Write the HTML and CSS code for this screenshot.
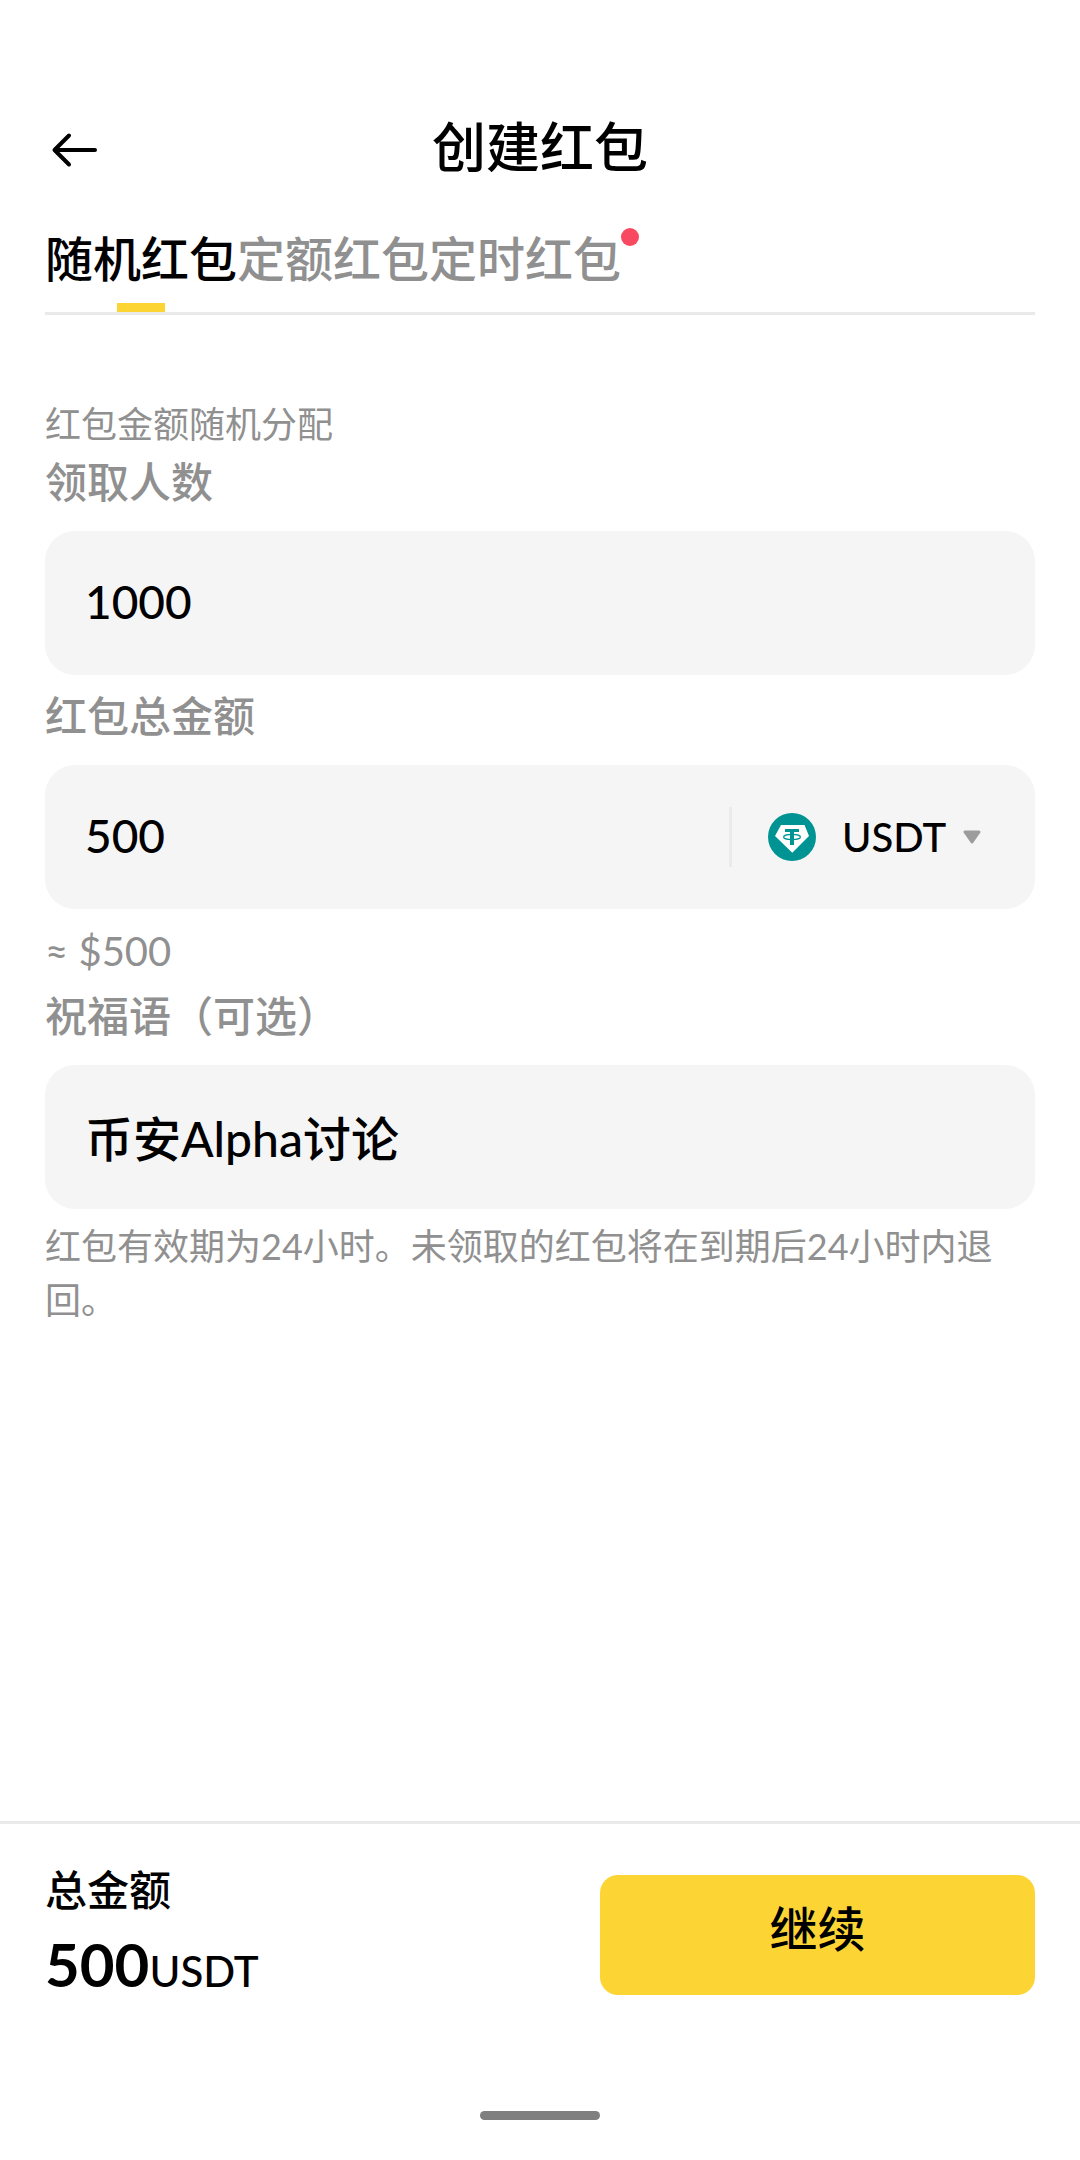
FILE: index.html
```html
<!DOCTYPE html>
<html lang="zh-CN">
<head>
<meta charset="utf-8">
<meta name="viewport" content="width=device-width, initial-scale=1">
<title>创建红包</title>
<link rel="stylesheet" href="styles.css">
</head>
<body>
<header class="topbar">
  <button class="back" type="button" aria-label="返回">
    <svg width="60" height="60" viewBox="0 0 60 60" fill="none" stroke="currentColor" stroke-width="4" stroke-linecap="round" stroke-linejoin="round" aria-hidden="true"><path d="M50 30H10M24 15.500L9.500 30 24 44.500"/></svg>
  </button>
  <h1 class="title">创建红包</h1>
</header>

<nav class="tabs">
  <button class="tab tab-active" type="button">随机红包</button>
  <button class="tab" type="button">定额红包</button>
  <button class="tab" type="button">定时红包<span class="dot"></span></button>
</nav>

<main class="form">
  <p class="hint">红包金额随机分配</p>

  <label class="label" for="count">领取人数</label>
  <div class="field">
    <input class="input input-number" id="count" type="text" inputmode="numeric" value="1000">
  </div>

  <label class="label label-spaced" for="amount">红包总金额</label>
  <div class="field">
    <input class="input input-number" id="amount" type="text" inputmode="decimal" value="500">
    <div class="currency">
      <svg class="coin" width="48" height="48" viewBox="0 0 48 48" aria-hidden="true">
        <circle cx="24" cy="24" r="24" fill="#009393"/>
        <path d="M13 12h23.500L41 23 24.300 39.700 7 23z" fill="#fff"/>
        <path d="M17 16h14v3h-5v13h-4V19h-5z" fill="#009393"/>
        <ellipse cx="24" cy="24" rx="8.400" ry="2.600" fill="none" stroke="#009393" stroke-width="1.200"/>
      </svg>
      <select class="select" aria-label="币种"><option>USDT</option></select>
      <svg class="caret" width="18" height="14" viewBox="0 0 18 14" aria-hidden="true"><path d="M2 2h14L9 12z" fill="#9c9c9c" stroke="#9c9c9c" stroke-width="3" stroke-linejoin="round"/></svg>
    </div>
  </div>
  <p class="approx">≈ $500</p>

  <label class="label" for="wish">祝福语（可选）</label>
  <div class="field">
    <input class="input" id="wish" type="text" value="币安Alpha讨论">
  </div>
  <p class="note">红包有效期为24小时。未领取的红包将在到期后24小时内退回。</p>
</main>

<footer class="footer">
  <div class="checkout">
    <div class="total">
      <div class="total-label">总金额</div>
      <div class="total-value">500<span class="total-unit">USDT</span></div>
    </div>
    <button class="submit" type="button">继续</button>
  </div>
  <div class="home-bar"></div>
</footer>
</body>
</html>
```
FILE: styles.css
```css
* {
  box-sizing: border-box;
}

body {
  display: flex;
  flex-direction: column;
  min-height: 100vh;
  margin: 0;
  background: #fff;
  color: #000;
  font-family: Lato, "Noto Sans CJK SC", sans-serif;
  font-size: 42px;
  font-weight: 500;
  line-height: 60px;
}

button,
input,
select {
  margin: 0;
  padding: 0;
  border: 0;
  background: none;
  color: inherit;
  font: inherit;
}

p {
  margin: 0;
}

.topbar {
  display: grid;
  grid-template-columns: 60px 1fr 60px;
  align-items: center;
  height: 108px;
  margin: 96px 45px 0;
}

.back {
  display: block;
  height: 60px;
}

.back svg {
  display: block;
}

.title {
  margin: 0;
  padding-bottom: 4px;
  font-size: 54px;
  font-weight: 500;
  text-align: center;
}

.tabs {
  display: flex;
  margin: 0 45px;
  border-bottom: 3px solid #eaeaea;
}

.tab {
  position: relative;
  padding-top: 2px;
  color: #909090;
  font-size: 48px;
  line-height: 106px;
}

.tab-active {
  color: #000;
}

.tab-active::after {
  content: "";
  position: absolute;
  bottom: 0;
  left: 50%;
  width: 48px;
  height: 9px;
  margin-left: -24px;
  background: #fcd535;
}

.dot {
  position: absolute;
  top: 24px;
  left: 100%;
  width: 18px;
  height: 18px;
  border-radius: 50%;
  background: #f84960;
}

.form {
  display: flex;
  flex: 1;
  flex-direction: column;
  padding: 82px 45px 48px;
  color: #909090;
}

.hint,
.note {
  font-size: 36px;
  font-weight: 400;
  line-height: 54px;
}

.hint {
  margin-bottom: 1px;
}

.label {
  margin-bottom: 19px;
}

.label-spaced {
  margin-top: 11px;
}

.field {
  display: flex;
  align-items: center;
  height: 144px;
  padding: 0 54px 0 40px;
  border-radius: 30px;
  background: #f5f5f5;
  color: #000;
}

.input {
  flex: 1;
  min-width: 0;
  height: 72px;
  padding-bottom: 3px;
  outline: none;
  font-size: 48px;
}

.input-number {
  font-size: 46px;
}

.currency {
  display: flex;
  align-items: center;
  height: 60px;
  padding-left: 36px;
  border-left: 3px solid #eaeaea;
}

.select {
  height: 60px;
  margin: 0 16px 0 26px;
  padding-bottom: 2px;
  font-size: 40px;
  appearance: none;
}

.approx {
  margin: 12px 0 5px;
  font-size: 40px;
  font-weight: 400;
}

.note {
  margin-top: 10px;
}

.footer {
  border-top: 3px solid #eaeaea;
}

.checkout {
  display: grid;
  grid-template-columns: 37fr 29fr;
  align-items: end;
  padding: 36px 45px 116px;
}

.total-value {
  margin-top: 13px;
  font-size: 60px;
  font-weight: 700;
  line-height: 62px;
}

.total-unit {
  font-size: 42px;
  font-weight: 500;
  line-height: 40px;
}

.submit {
  height: 120px;
  padding-bottom: 12px;
  border-radius: 18px;
  background: #fcd535;
  font-size: 48px;
}

.home-bar {
  width: 120px;
  height: 9px;
  margin: 0 auto 40px;
  border-radius: 5px;
  background: #7f7f7f;
}
```
